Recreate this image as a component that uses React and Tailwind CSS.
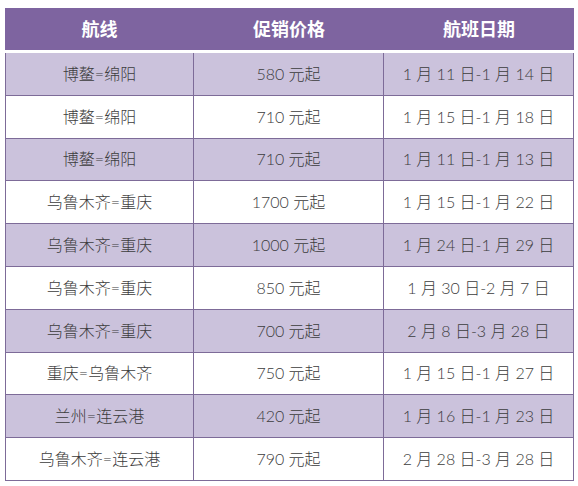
const rows = [
  ['博鳌=绵阳', '580 元起', '1 月 11 日-1 月 14 日'],
  ['博鳌=绵阳', '710 元起', '1 月 15 日-1 月 18 日'],
  ['博鳌=绵阳', '710 元起', '1 月 11 日-1 月 13 日'],
  ['乌鲁木齐=重庆', '1700 元起', '1 月 15 日-1 月 22 日'],
  ['乌鲁木齐=重庆', '1000 元起', '1 月 24 日-1 月 29 日'],
  ['乌鲁木齐=重庆', '850 元起', '1 月 30 日-2 月 7 日'],
  ['乌鲁木齐=重庆', '700 元起', '2 月 8 日-3 月 28 日'],
  ['重庆=乌鲁木齐', '750 元起', '1 月 15 日-1 月 27 日'],
  ['兰州=连云港', '420 元起', '1 月 16 日-1 月 23 日'],
  ['乌鲁木齐=连云港', '790 元起', '2 月 28 日-3 月 28 日'],
];

export default function App() {
  return (
    <div
      className="w-[578px] h-[486px] bg-white pt-[8px] pl-[5px]"
      style={{ fontFamily: 'Lato, "Noto Sans CJK SC", sans-serif' }}
    >
      {/* Header */}
      <div className="w-[569px] h-[42px] bg-[#7e64a0] grid grid-cols-[189px_190px_190px] text-white text-[18px] font-bold">
        <div className="flex items-center justify-center">航线</div>
        <div className="flex items-center justify-center">促销价格</div>
        <div className="flex items-center justify-center">航班日期</div>
      </div>

      {/* Body */}
      <div className="mt-[3px] w-[569px] border-l border-r border-[#7d6b98] text-[16px] font-light text-[#3c3c3c]">
        {rows.map((r, i) => (
          <div
            key={i}
            className={`grid grid-cols-[188px_190px_189px] h-[42.8px] border-b border-[#7d6b98] ${
              i % 2 === 0 ? 'bg-[#cbc2dc]' : 'bg-white'
            }`}
          >
            <div className="flex items-center justify-center border-r border-[#7d6b98]">{r[0]}</div>
            <div className="flex items-center justify-center border-r border-[#7d6b98]">{r[1]}</div>
            <div className="flex items-center justify-center">{r[2]}</div>
          </div>
        ))}
      </div>
    </div>
  );
}
